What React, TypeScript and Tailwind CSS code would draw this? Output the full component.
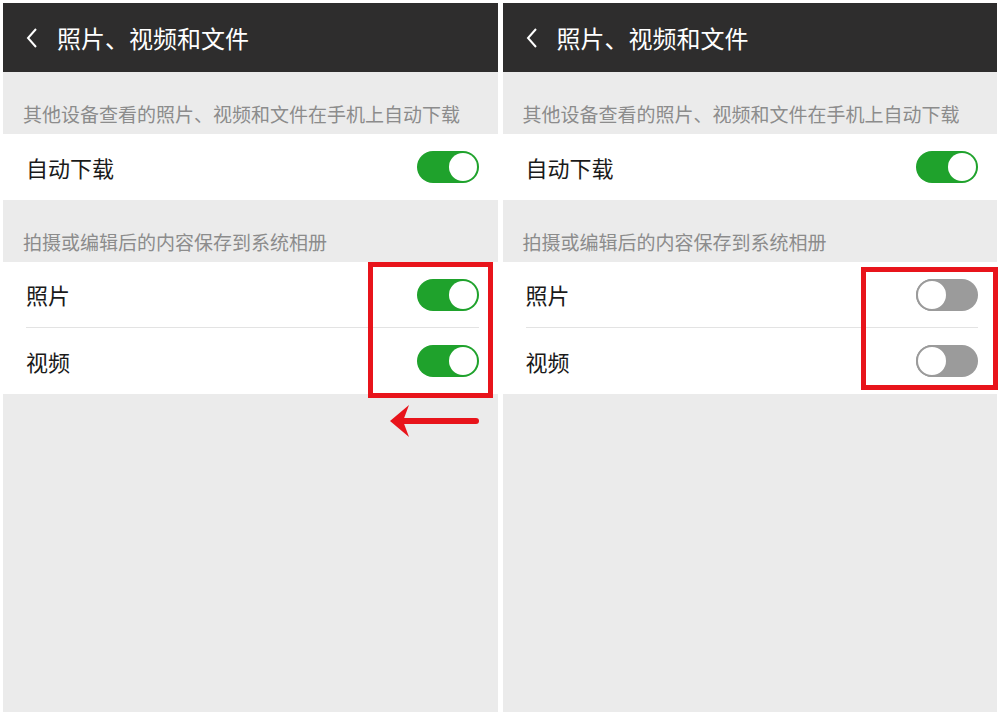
import React from 'react';

const font = { fontFamily: '"Noto Sans CJK SC", "Noto Sans", sans-serif' };

function Toggle({ on }: { on: boolean }) {
  if (on) {
    return (
      <div className="w-[62px] h-[32px] rounded-full bg-[#1fa22c] flex items-center justify-end pr-[2px]">
        <div className="w-[28px] h-[28px] rounded-full bg-white" />
      </div>
    );
  }
  return (
    <div className="w-[62px] h-[32px] rounded-full bg-[#9b9b9b] flex items-center justify-start">
      <div className="w-[32px] h-[32px] rounded-full bg-white border-[2px] border-[#9b9b9b]" />
    </div>
  );
}

function Row({ label, on, divider }: { label: string; on: boolean; divider?: boolean }) {
  return (
    <div className="bg-white pl-[23px] pr-[19px]">
      <div className={`h-[66px] flex items-center justify-between ${divider ? 'border-b border-[#e3e3e3]' : ''}`}>
        <span className="text-[22px] text-[#1a1a1a]">{label}</span>
        <Toggle on={on} />
      </div>
    </div>
  );
}

function Section({ title, pb }: { title: string; pb: string }) {
  return (
    <div className={`h-[62px] flex items-end pl-[20px] text-[19px] text-[#8c8c8c] ${pb}`}>{title}</div>
  );
}

function Screen({ mediaOn, children }: { mediaOn: boolean; children?: React.ReactNode }) {
  return (
    <div className="relative flex-1 flex flex-col bg-[#ebebeb]" style={font}>
      <div className="h-[69px] bg-[#2e2d2d] flex items-center pl-[22px] gap-[18px] text-white">
        <svg width="14" height="24" viewBox="0 0 14 24" fill="none">
          <path d="M11 3 L3 12 L11 21" stroke="#ffffff" strokeWidth="2" />
        </svg>
        <span className="text-[24px]">照片、视频和文件</span>
      </div>
      <Section title="其他设备查看的照片、视频和文件在手机上自动下载" pb="pb-[6px]" />
      <Row label="自动下载" on />
      <Section title="拍摄或编辑后的内容保存到系统相册" pb="pb-[6px]" />
      <Row label="照片" on={mediaOn} divider />
      <Row label="视频" on={mediaOn} />
      {children}
    </div>
  );
}

export default function App() {
  return (
    <div className="w-[1000px] h-[712px] bg-white flex gap-[5px] pl-[3px] pr-[3px] pt-[3px] overflow-hidden">
      <Screen mediaOn>
        <div className="absolute left-[365px] top-[259px] w-[125px] h-[136px] border-[5px] border-[#e8141b]" />
        <svg className="absolute left-[385px] top-[400px]" width="92" height="36" viewBox="0 0 92 36">
          <path d="M12 18 L88 18" stroke="#e8141b" strokeWidth="6" strokeLinecap="round" />
          <path d="M2 18 L21 2 L15 18 L21 34 Z" fill="#e8141b" />
        </svg>
      </Screen>
      <Screen mediaOn={false}>
        <div className="absolute left-[358px] top-[264px] w-[137px] h-[123px] border-[5px] border-[#e8141b]" />
      </Screen>
    </div>
  );
}
